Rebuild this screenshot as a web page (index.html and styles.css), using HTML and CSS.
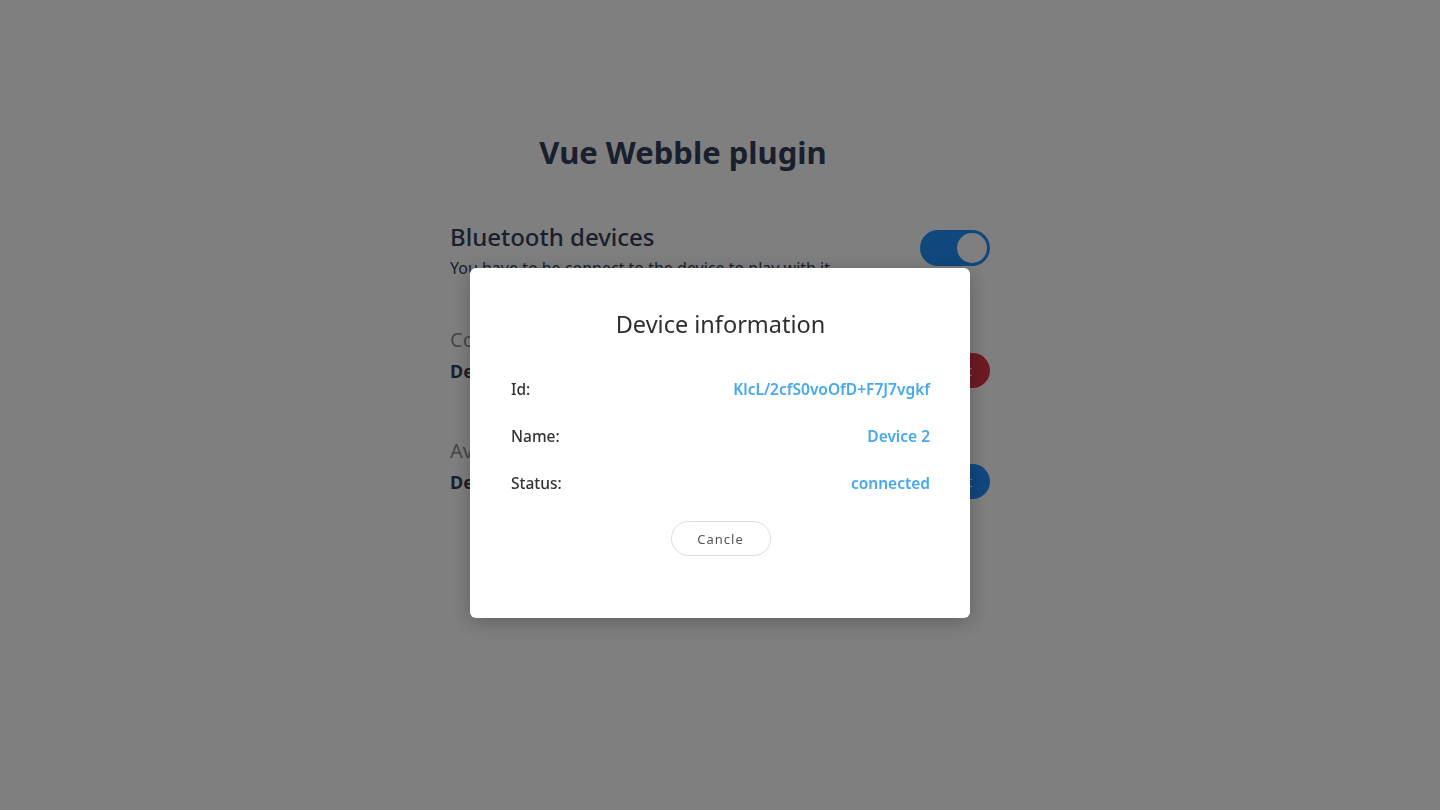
FILE: index.html
```html
<!DOCTYPE html>
<html lang="en">
<head>
<meta charset="utf-8">
<title>Vue Webble plugin</title>
<link rel="stylesheet" href="styles.css">
</head>
<body>
<div class="app">
  <h1 class="title">Vue Webble plugin</h1>
  <section class="panel">
    <div class="head">
      <div>
        <h2 class="head-title">Bluetooth devices</h2>
        <p class="head-sub">You have to be connect to the device to play with it.</p>
      </div>
      <span class="toggle"><span class="knob"></span></span>
    </div>
    <div class="group">
      <h3 class="group-title">Connected devices</h3>
      <div class="device">
        <span class="device-name">Device 2</span>
        <button class="btn btn-red">Disconnect</button>
      </div>
    </div>
    <div class="group">
      <h3 class="group-title">Available devices</h3>
      <div class="device">
        <span class="device-name">Device 1</span>
        <button class="btn btn-blue">Connect</button>
      </div>
    </div>
  </section>
</div>

<div class="overlay">
  <div class="modal">
    <h2 class="modal-title">Device information</h2>
    <dl class="info">
      <div class="row"><dt>Id:</dt><dd>KlcL/2cfS0voOfD+F7J7vgkf</dd></div>
      <div class="row"><dt>Name:</dt><dd>Device 2</dd></div>
      <div class="row"><dt>Status:</dt><dd>connected</dd></div>
    </dl>
    <div class="actions"><button class="cancel">Cancle</button></div>
  </div>
</div>
</body>
</html>
```

FILE: styles.css
```css
* { box-sizing: border-box; }
html, body { margin: 0; height: 100%; }
body {
  font-family: "Noto Sans", "Open Sans", sans-serif;
  background: #ffffff;
  color: #1e2a3b;
}
.app {
  width: 540px;
  margin: 0 auto;
  padding-top: 128px;
}
.title {
  margin: 0 0 45px;
  font-size: 31px;
  font-weight: 700;
  text-align: center;
  padding-right: 74px;
  line-height: 48px;
  color: #323f59;
}
.head {
  display: flex;
  justify-content: space-between;
  align-items: flex-start;
}
.head-title {
  margin: 0;
  font-size: 24px;
  font-weight: 500;
  line-height: 32px;
  color: #323f59;
}
.head-sub {
  margin: 3px 0 0;
  font-size: 16px;
  line-height: 24px;
  color: #323f59;
}
.toggle {
  width: 70px;
  height: 36px;
  margin-top: 9px;
  border-radius: 18px;
  background: #2090fc;
  display: flex;
  justify-content: flex-end;
  align-items: center;
  padding: 3px;
}
.knob {
  width: 30px;
  height: 30px;
  border-radius: 50%;
  background: #ffffff;
}
.group { margin-top: 49px; }
.head + .group { margin-top: 46px; }
.group-title {
  margin: 0;
  font-size: 20px;
  font-weight: 400;
  line-height: 28px;
  color: #8e8e8e;
}
.device {
  display: flex;
  justify-content: space-between;
  align-items: center;
  margin-top: -1px;
}
.device-name { font-size: 18px; font-weight: 700; color: #323f59; }
.btn {
  border: none;
  height: 35px;
  padding: 0 18px;
  border-radius: 18px;
  font-family: inherit;
  font-size: 14px;
  color: #ffffff;
}
.btn-red { background: #dc3545; }
.btn-blue { background: #2090fc; }

.overlay {
  position: fixed;
  inset: 0;
  background: rgba(0, 0, 0, 0.5);
  display: flex;
  justify-content: center;
  align-items: flex-start;
  padding-top: 268px;
}
.modal {
  width: 500px;
  height: 350px;
  background: #ffffff;
  border-radius: 6px;
  box-shadow: 0 4px 20px rgba(0, 0, 0, 0.25);
  padding: 40px 40px 0 41px;
}
.modal-title {
  margin: 0;
  text-align: center;
  font-size: 23.5px;
  font-weight: 400;
  line-height: 32px;
  color: #2f2f2f;
}
.info {
  margin: 38px 0 0;
  display: flex;
  flex-direction: column;
  gap: 24px;
}
.row {
  display: flex;
  justify-content: space-between;
  align-items: center;
  font-size: 15.5px;
  line-height: 23px;
}
.row dt { font-weight: 500; color: #333333; }
.row dd { margin: 0; font-weight: 600; color: #46a9ee; }
.actions {
  display: flex;
  justify-content: center;
  margin-top: 26px;
}
.cancel {
  width: 100px;
  height: 35px;
  border: 1px solid #dedede;
  border-radius: 18px;
  background: #ffffff;
  font-family: inherit;
  font-size: 13px;
  letter-spacing: 1px;
  color: #555555;
}
```
